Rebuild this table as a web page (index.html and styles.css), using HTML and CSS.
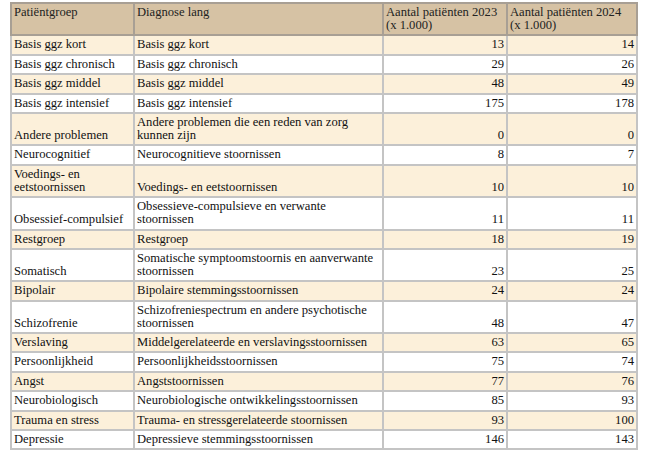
FILE: index.html
```html
<!DOCTYPE html>
<html lang="nl">
<head>
<meta charset="utf-8">
<title>Patiëntgroepen</title>
<link rel="stylesheet" href="styles.css">
</head>
<body>
<table class="data">
  <colgroup>
    <col class="c1"><col class="c2"><col class="c3"><col class="c4">
  </colgroup>
  <thead>
    <tr>
      <th>Patiëntgroep</th>
      <th>Diagnose lang</th>
      <th>Aantal patiënten 2023<br>(x 1.000)</th>
      <th>Aantal patiënten 2024<br>(x 1.000)</th>
    </tr>
  </thead>
  <tbody>
    <tr class="alt"><td>Basis ggz kort</td><td>Basis ggz kort</td><td class="num">13</td><td class="num">14</td></tr>
    <tr><td>Basis ggz chronisch</td><td>Basis ggz chronisch</td><td class="num">29</td><td class="num">26</td></tr>
    <tr class="alt"><td>Basis ggz middel</td><td>Basis ggz middel</td><td class="num">48</td><td class="num">49</td></tr>
    <tr><td>Basis ggz intensief</td><td>Basis ggz intensief</td><td class="num">175</td><td class="num">178</td></tr>
    <tr class="alt"><td>Andere problemen</td><td>Andere problemen die een reden van zorg<br>kunnen zijn</td><td class="num">0</td><td class="num">0</td></tr>
    <tr><td>Neurocognitief</td><td>Neurocognitieve stoornissen</td><td class="num">8</td><td class="num">7</td></tr>
    <tr class="alt"><td>Voedings- en<br>eetstoornissen</td><td>Voedings- en eetstoornissen</td><td class="num">10</td><td class="num">10</td></tr>
    <tr><td>Obsessief-compulsief</td><td>Obsessieve-compulsieve en verwante<br>stoornissen</td><td class="num">11</td><td class="num">11</td></tr>
    <tr class="alt"><td>Restgroep</td><td>Restgroep</td><td class="num">18</td><td class="num">19</td></tr>
    <tr><td>Somatisch</td><td>Somatische symptoomstoornis en aanverwante<br>stoornissen</td><td class="num">23</td><td class="num">25</td></tr>
    <tr class="alt"><td>Bipolair</td><td>Bipolaire stemmingsstoornissen</td><td class="num">24</td><td class="num">24</td></tr>
    <tr><td>Schizofrenie</td><td>Schizofreniespectrum en andere psychotische<br>stoornissen</td><td class="num">48</td><td class="num">47</td></tr>
    <tr class="alt"><td>Verslaving</td><td>Middelgerelateerde en verslavingsstoornissen</td><td class="num">63</td><td class="num">65</td></tr>
    <tr><td>Persoonlijkheid</td><td>Persoonlijkheidsstoornissen</td><td class="num">75</td><td class="num">74</td></tr>
    <tr class="alt"><td>Angst</td><td>Angststoornissen</td><td class="num">77</td><td class="num">76</td></tr>
    <tr><td>Neurobiologisch</td><td>Neurobiologische ontwikkelingsstoornissen</td><td class="num">85</td><td class="num">93</td></tr>
    <tr class="alt"><td>Trauma en stress</td><td>Trauma- en stressgerelateerde stoornissen</td><td class="num">93</td><td class="num">100</td></tr>
    <tr><td>Depressie</td><td>Depressieve stemmingsstoornissen</td><td class="num">146</td><td class="num">143</td></tr>
  </tbody>
</table>
</body>
</html>
```

FILE: styles.css
```css
html, body {
  margin: 0;
  padding: 0;
  background: #ffffff;
}

body {
  padding: 2px 0 0 10px;
  font-family: "Liberation Serif", "Times New Roman", serif;
  font-size: 12.6px;
  line-height: 13px;
  color: #111111;
}

.data {
  border-collapse: collapse;
  table-layout: fixed;
  width: 626px;
}

.c1 { width: 123px; }
.c2 { width: 249px; }
.c3 { width: 124px; }
.c4 { width: 130px; }

.data th,
.data td {
  border: 2px solid #c4c4c4;
  padding: 2px 2px 2.4px 2px;
  vertical-align: bottom;
  text-align: left;
  font-weight: normal;
  white-space: nowrap;
}

.data th {
  background: #d6c2a4;
  border-color: #a89f94;
  vertical-align: top;
  color: #222;
}

.data tr.alt td {
  background: #fcf0da;
}

.data td.num {
  text-align: right;
}
```
